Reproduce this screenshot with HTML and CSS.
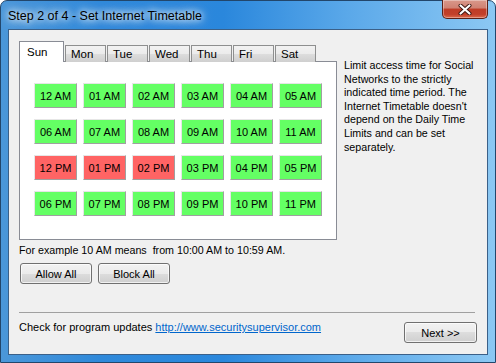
FILE: index.html
```html
<!DOCTYPE html>
<html lang="en">
<head>
    <meta charset="UTF-8">
    <title>Step 2 of 4 - Set Internet Timetable</title>
    <link rel="stylesheet" href="styles.css">
</head>
<body>
    <div class="window">
        <div class="titlebar">
            <div class="title">Step 2 of 4 - Set Internet Timetable</div>
            <div class="close">
                <svg width="14" height="11" viewBox="0 0 14 11">
                    <path d="M2.5 1.5 L11.5 9.5 M11.5 1.5 L2.5 9.5" stroke="#3b1510" stroke-width="4" stroke-linecap="round"/>
                    <path d="M2.5 1.5 L11.5 9.5 M11.5 1.5 L2.5 9.5" stroke="#fff" stroke-width="2.2" stroke-linecap="round"/>
                </svg>
            </div>
        </div>

        <div class="client">
            <div class="top">
                <div class="schedule">
                    <div class="tabs">
                        <div class="tab active">Sun</div>
                        <div class="tab">Mon</div>
                        <div class="tab">Tue</div>
                        <div class="tab">Wed</div>
                        <div class="tab">Thu</div>
                        <div class="tab">Fri</div>
                        <div class="tab">Sat</div>
                    </div>
                    <div class="panel">
                        <div class="hours" id="hours"></div>
                    </div>
                </div>
                <div class="info">
                    Limit access time for Social<br>
                    Networks to the strictly<br>
                    indicated time period. The<br>
                    Internet Timetable doesn't<br>
                    depend on the Daily Time<br>
                    Limits and can be set<br>
                    separately.
                </div>
            </div>

            <div class="hint">For example 10 AM means&nbsp; from 10:00 AM to 10:59 AM.</div>

            <div class="actions">
                <button class="btn" onclick="setAll(true)">Allow All</button>
                <button class="btn" onclick="setAll(false)">Block All</button>
            </div>

            <div class="separator"></div>

            <div class="footer">
                <div class="updates">Check for program updates <a href="#">http://www.securitysupervisor.com</a></div>
                <button class="btn next">Next &gt;&gt;</button>
            </div>
        </div>
    </div>

    <script>
        const blocked = [12, 13, 14];
        const hoursBox = document.getElementById('hours');
        const cells = [];

        function label(h) {
            const suffix = h < 12 ? 'AM' : 'PM';
            let n = h % 12;
            if (n === 0) n = 12;
            return n.toString().padStart(2, '0') + ' ' + suffix;
        }

        for (let h = 0; h < 24; h++) {
            const cell = document.createElement('div');
            cell.className = 'hour' + (blocked.includes(h) ? ' blocked' : '');
            cell.textContent = label(h);
            cell.onclick = () => cell.classList.toggle('blocked');
            hoursBox.appendChild(cell);
            cells.push(cell);
        }

        function setAll(allow) {
            cells.forEach(c => c.classList.toggle('blocked', !allow));
        }
    </script>
</body>
</html>
```

FILE: styles.css
```css
body {
    margin: 0;
    padding: 0;
    background: #fff;
    font-family: "Liberation Sans", Arial, sans-serif;
    font-size: 11px;
    color: #000;
}
.window {
    width: 496px;
    height: 363px;
    box-sizing: border-box;
    display: flex;
    flex-direction: column;
    padding: 0 7px 7px 7px;
    border: 1px solid #22466b;
    border-radius: 7px 7px 0 0;
    background: linear-gradient(to right, #4b97d9 0%, #2f89da 20%, #2a87dc 45%, #5aa8e9 70%, #8cc8f3 100%);
}
.titlebar {
    height: 28px;
    display: flex;
    justify-content: space-between;
    flex-shrink: 0;
}
.title {
    font-family: "Liberation Sans", Arial, sans-serif;
    font-size: 12.5px;
    line-height: 16px;
    margin-top: 7px;
    padding: 0 6px 0 0;
    color: #000;
    text-shadow: 0 0 6px #fff, 0 0 10px rgba(255, 255, 255, 0.9), 0 0 14px rgba(255, 255, 255, 0.7);
}
.close {
    width: 46px;
    height: 19px;
    box-sizing: border-box;
    margin-top: -1px;
    display: flex;
    align-items: center;
    justify-content: center;
    border: 1px solid #5b2118;
    border-top: none;
    border-radius: 0 0 5px 5px;
    background: linear-gradient(#d9988a 0%, #cf8172 45%, #bf3d27 50%, #c2402a 80%, #dd6a4c 100%);
    box-shadow: inset 0 0 0 1px rgba(255, 255, 255, 0.35);
}
.close svg {
    display: block;
}
.client {
    flex: 1;
    display: flex;
    flex-direction: column;
    background: #f0f0f0;
    border: 1px solid #3b6088;
    padding: 11px 10px 0 10px;
}
.top {
    display: flex;
    gap: 7px;
}
.schedule {
    width: 318px;
    flex-shrink: 0;
}
.tabs {
    display: flex;
    height: 21px;
    margin-bottom: -1px;
    position: relative;
    z-index: 1;
}
.tab {
    box-sizing: border-box;
    width: 41px;
    height: 17px;
    margin-top: 4px;
    margin-right: 1px;
    padding: 1px 0 0 5px;
    border: 1px solid #8e8f8f;
    border-bottom: none;
    background: linear-gradient(#f2f2f2 0%, #ebebeb 50%, #dddddd 50%, #cfcfcf 100%);
    font-size: 11.5px;
    line-height: 14px;
}
.tab.active {
    width: 45px;
    height: 21px;
    margin-top: 0;
    padding: 3px 0 0 7px;
    background: #fff;
    border-color: #898c95;
}
.panel {
    box-sizing: border-box;
    height: 179px;
    border: 1px solid #898c95;
    background: #fff;
    padding: 21px 0 0 14px;
}
.hours {
    display: grid;
    grid-template-columns: repeat(6, 43px);
    grid-auto-rows: 25px;
    column-gap: 6px;
    row-gap: 11px;
}
.hour {
    box-sizing: border-box;
    display: flex;
    align-items: center;
    justify-content: center;
    background: #64ff64;
    border: 1px solid;
    border-color: #e6e6e6 #a0a0a0 #a0a0a0 #e6e6e6;
    cursor: pointer;
}
.hour.blocked {
    background: #ff6464;
}
.info {
    margin-top: 18px;
    line-height: 13.6px;
    font-size: 10.7px;
    white-space: nowrap;
}
.hint {
    margin-top: 4px;
    line-height: 13px;
    font-size: 10.7px;
}
.actions {
    display: flex;
    gap: 6px;
    margin: 6px 0 0 1px;
}
.btn {
    box-sizing: border-box;
    width: 72px;
    height: 21px;
    padding: 0;
    border: 1px solid #707070;
    border-radius: 3px;
    background: linear-gradient(#f2f2f2 0%, #ebebeb 50%, #dddddd 50%, #cfcfcf 100%);
    box-shadow: inset 0 0 0 1px rgba(255, 255, 255, 0.7);
    font-family: "Liberation Sans", Arial, sans-serif;
    font-size: 11px;
    color: #000;
}
.separator {
    height: 1px;
    margin: auto 2px 0 0;
    background: #a0a0a0;
}
.footer {
    display: flex;
    justify-content: space-between;
    align-items: flex-start;
    padding-bottom: 11px;
}
.updates {
    margin-top: 8px;
    line-height: 13px;
}
.updates a {
    color: #0066cc;
}
.next {
    width: 73px;
    margin-top: 9px;
}
```
